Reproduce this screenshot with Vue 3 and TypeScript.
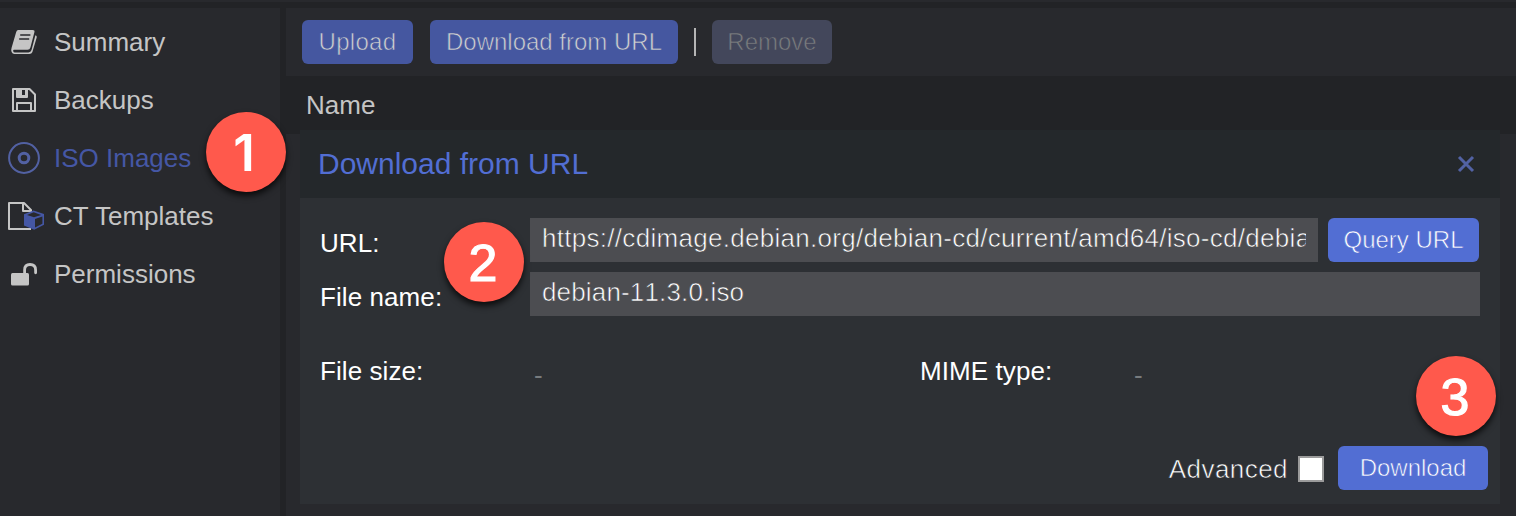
<script setup lang="ts">
import { ref } from 'vue'

type IconName = 'book' | 'floppy' | 'disc' | 'template' | 'unlock'
interface NavItem { label: string; icon: IconName; active?: boolean }

const items: NavItem[] = [
  { label: 'Summary', icon: 'book' },
  { label: 'Backups', icon: 'floppy' },
  { label: 'ISO Images', icon: 'disc', active: true },
  { label: 'CT Templates', icon: 'template' },
  { label: 'Permissions', icon: 'unlock' },
]
const url = ref('https://cdimage.debian.org/debian-cd/current/amd64/iso-cd/debia')
const fileName = ref('debian-11.3.0.iso')
const advanced = ref(false)
</script>

<template>
  <div class="app">
    <div class="topline"></div>
    <div class="columns">
      <nav class="sidebar">
        <a v-for="item in items" :key="item.label" class="nav-item" :class="{ active: item.active }">
          <svg class="nav-icon" viewBox="0 0 48 40" width="48" height="40">
            <g v-if="item.icon === 'book'">
              <path fill="#c5c5c5" d="M18.2 8H32.6Q35 8 34.4 10.2L30.4 25.6Q29.8 27.8 27.6 27.8H14.2Q12.8 27.8 13.2 29.2Q13.6 30.4 15 30.4H28.4Q30.8 30.4 31.5 28L35.4 13.2Q37.2 13.7 36.7 15.4L32.4 30Q31.6 32 29.4 32H14.4Q12.5 32 11.6 30Q10.8 28.2 11.6 25.8L16.2 10Q16.8 8 18.2 8Z" />
              <path stroke="#28292d" stroke-width="1.6" d="M20.2 13H30.4M19.2 17H29.2" />
            </g>
            <g v-else-if="item.icon === 'floppy'">
              <path fill="none" stroke="#c5c5c5" stroke-width="2" stroke-linejoin="round" d="M13 9H29.5L35 14.5V31H13ZM17 31V23H31V31M17 9V17H27V9" />
              <path fill="#c5c5c5" d="M17 9H22V15H17ZM25 9H27V17H25ZM17 15H27V17H17Z" />
            </g>
            <g v-else-if="item.icon === 'disc'" fill="none" stroke="#5261a3">
              <circle cx="24" cy="20" r="14.9" stroke-width="2" />
              <circle cx="24" cy="20" r="4.8" stroke-width="3" />
            </g>
            <g v-else-if="item.icon === 'template'">
              <path fill="none" stroke="#c5c5c5" stroke-width="2" stroke-linejoin="round" d="M31 33H9V7H24L31 14V17M23 7V15H31" />
              <path fill="#4557a5" fill-rule="evenodd" d="M24 18.3L33.5 14.6L44 18V28.8L34.2 33.8L24 29.5ZM27 18.9L34 21.2L41.2 18.9L33.7 16.2ZM35 23V31.5L42.4 27.8V20.4Z" />
            </g>
            <g v-else>
              <rect x="11" y="19" width="18" height="12.5" rx="1.5" fill="#c5c5c5" />
              <path fill="none" stroke="#c5c5c5" stroke-width="2.8" stroke-linecap="round" d="M24.6 20V16Q24.6 10.5 30 10.5Q35.6 10.5 35.6 16V18.8" />
            </g>
          </svg>
          <span>{{ item.label }}</span>
        </a>
      </nav>
      <main class="content">
        <div class="toolbar">
          <button class="btn dim upload">Upload</button>
          <button class="btn dim from-url">Download from URL</button>
          <span class="separator"></span>
          <button class="btn disabled" disabled>Remove</button>
        </div>
        <div class="grid-head">Name</div>
      </main>
    </div>

    <section class="dialog">
      <header class="dialog-head">
        <h1>Download from URL</h1>
        <svg class="close" width="18" height="18" viewBox="0 0 18 18"><path d="M2 2L16 16M16 2L2 16" /></svg>
      </header>
      <div class="dialog-body">
        <div class="row">
          <label>URL:</label>
          <div class="field"><span class="value">{{ url }}</span></div>
          <button class="btn query">Query URL</button>
        </div>
        <div class="row">
          <label>File name:</label>
          <div class="field"><span class="value file">{{ fileName }}</span></div>
        </div>
        <div class="facts">
          <div class="fact"><span class="key">File size:</span><span class="dash">-</span></div>
          <div class="fact"><span class="key">MIME type:</span><span class="dash">-</span></div>
        </div>
        <footer class="actions">
          <span class="advanced">Advanced</span>
          <span class="check" :class="{ on: advanced }" @click="advanced = !advanced"></span>
          <button class="btn download">Download</button>
        </footer>
      </div>
    </section>

    <div class="marker one"><span>1</span></div>
    <div class="marker two"><span>2</span></div>
    <div class="marker three"><span>3</span></div>
  </div>
</template>

<style>
body { background: #222326; overflow: hidden; }
</style>

<style scoped>
* { box-sizing: border-box; }
.app {
  position: relative; width: 1516px; height: 516px; overflow: hidden;
  display: flex; flex-direction: column;
  background: #222326; color: #c5c5c5;
  font: 26px/30px "Liberation Sans", Arial, sans-serif;
}
.topline { height: 2px; background: #28292d; margin-bottom: 6px; flex: none; }
.columns { display: flex; gap: 6px; flex: 1; }
.sidebar { width: 280px; padding-top: 5px; background: #28292d; }
.nav-item { display: flex; align-items: center; height: 58px; }
.nav-item.active { color: #4557a5; }
.nav-icon { flex: none; margin-right: 6px; }
.content { flex: 1; background: #28292d; }
.toolbar { display: flex; align-items: center; height: 68px; padding-left: 16px; }
.btn {
  height: 44px; padding: 0 0 1px; border: 0; border-radius: 6px; flex: none;
  font: 24px/28px "Liberation Sans", Arial, sans-serif; color: #fff; background: #526ed3;
  -webkit-text-stroke: 0.6px #526ed3; white-space: nowrap;
}
.btn.dim { background: #4557a0; color: #d0d0d0; -webkit-text-stroke-color: #4557a0; }
.upload { width: 111px; margin-right: 17px; letter-spacing: .3px; }
.from-url { width: 248px; }
.separator { width: 2px; height: 28px; margin: 0 17px 0 16px; background: #b5b5b5; }
.btn.disabled { width: 120px; margin-left: -1px; background: #43475b; color: #7a7c7e; -webkit-text-stroke-color: #43475b; }
.grid-head { height: 58px; padding: 14px 20px; background: #222326; }

.dialog {
  position: absolute; left: 300px; top: 130px; width: 1200px; height: 374px;
  display: flex; flex-direction: column; background: #2d3034; color: #fff;
}
.dialog-head {
  display: flex; align-items: center; justify-content: space-between;
  height: 68px; padding: 0 25px 0 18px; background: #24282b; color: #526ed3;
}
h1 { margin: 0; font-size: 30px; font-weight: 400; line-height: 36px; }
.close path { fill: none; stroke: #5262a3; stroke-width: 3; }
.dialog-body { display: flex; flex-direction: column; flex: 1; padding: 20px 12px 14px 20px; }
.row { display: flex; height: 44px; margin: 0 8px 10px 0; }
label { width: 210px; padding-top: 10px; flex: none; letter-spacing: .08px; }
.field { flex: 1; min-width: 0; padding: 5px 12px 0; background: #4c4d51; }
.value {
  display: block; overflow: hidden; white-space: nowrap; letter-spacing: .29px;
  -webkit-text-stroke: 0.6px #4c4d51;
}
.value.file { letter-spacing: .16px; font-kerning: none; }
.query { width: 151px; margin: 0 1px 0 10px; }
.facts { display: flex; padding-top: 30px; }
.fact { width: 600px; display: flex; flex: none; }
.key { width: 214px; letter-spacing: .08px; }
.dash { color: #777b7e; padding-top: 4px; }
.actions { display: flex; align-items: center; justify-content: flex-end; margin-top: auto; }
.advanced { padding-top: 2px; letter-spacing: .45px; -webkit-text-stroke: 0.6px #2d3034; margin-right: 10px; }
.check { width: 26px; height: 26px; margin: 1px 14px 0 0; border: 2px solid #9b9b9b; background: #fff; }
.check.on { background: #526ed3; }
.download { width: 150px; }

.marker {
  position: absolute; width: 80px; height: 80px; padding-top: 2px; border-radius: 50%;
  display: flex; align-items: center; justify-content: center;
  background: #ff594c; color: #fff; font: 52px/60px "Liberation Sans", Arial, sans-serif;
  -webkit-text-stroke: 1.2px #fff; box-shadow: 0 4px 6px rgba(0, 0, 0, .75);
}
.one { left: 206px; top: 112px; padding-right: 4px; font: 600 51px/60px Inter, sans-serif; -webkit-text-stroke: 0; }
.two { left: 444px; top: 222px; padding-right: 2px; }
.three { left: 1416px; top: 356px; padding-right: 2px; }
</style>
